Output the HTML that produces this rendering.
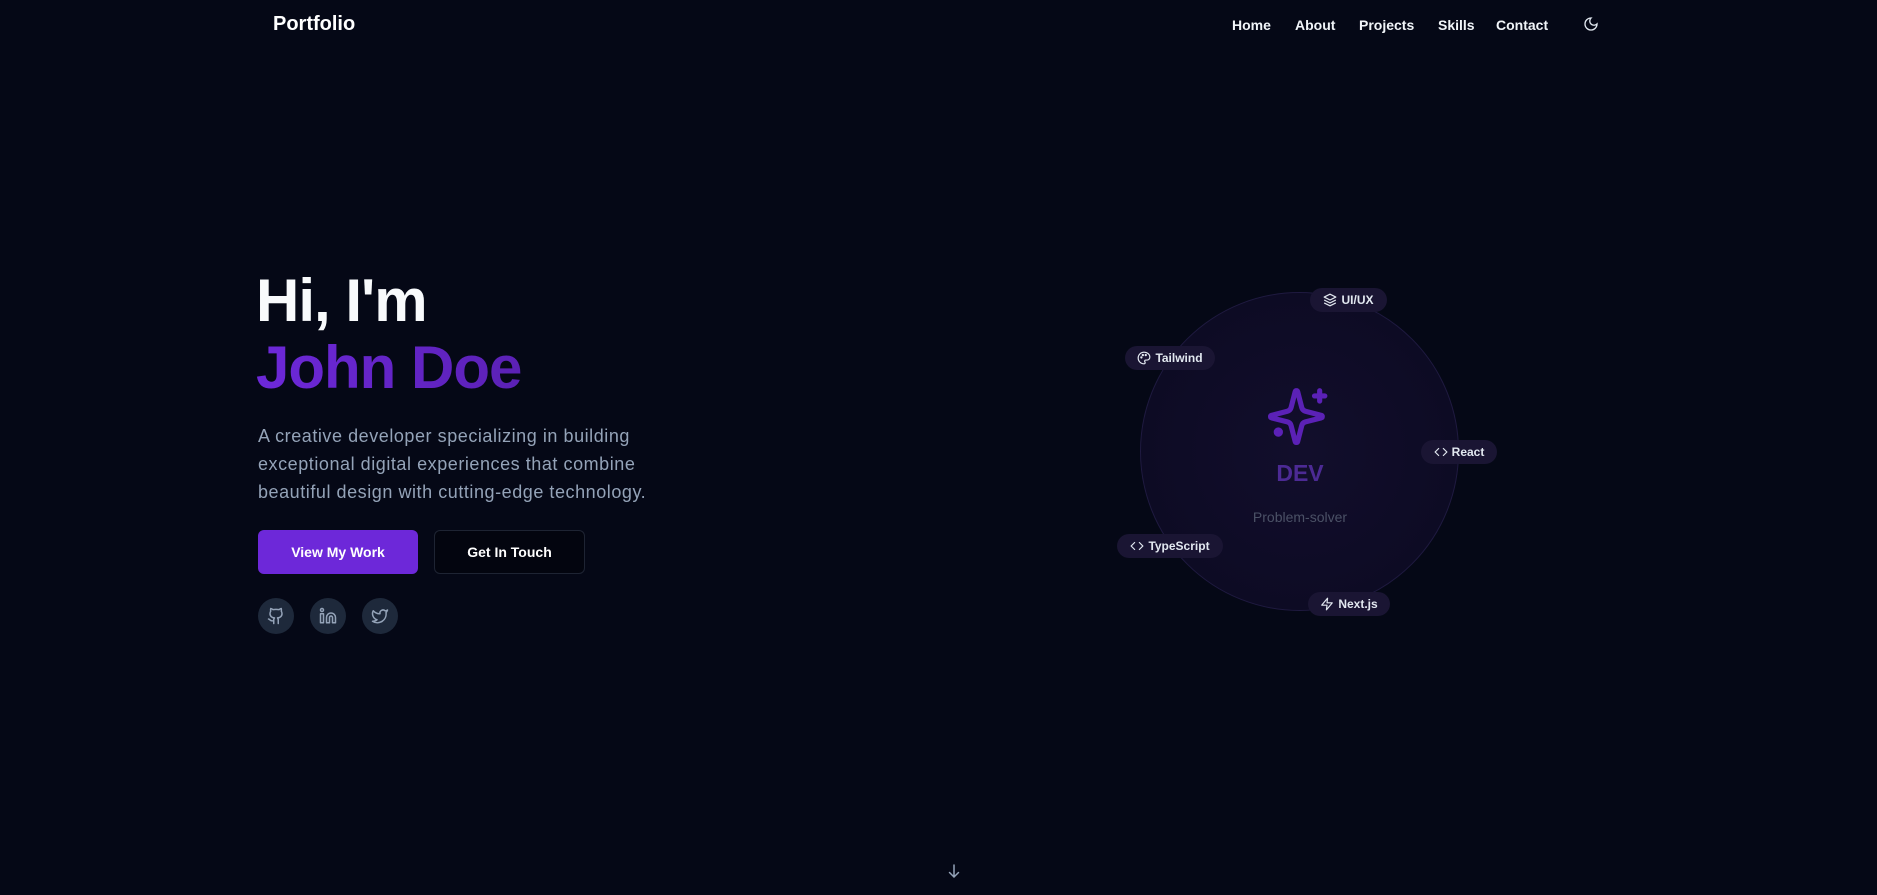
<!DOCTYPE html>
<html><head><meta charset="utf-8"><style>
*{margin:0;padding:0;box-sizing:border-box}
body{width:1877px;height:895px;overflow:hidden;background:#050816;font-family:"Liberation Sans",sans-serif;position:relative;color:#f8fafc}
.a{position:absolute;white-space:nowrap}
.nav{font-size:14px;font-weight:bold;color:#f1f5f9;top:17px}
.btn{position:absolute;height:44px;border-radius:6px;font-size:14px;font-weight:bold;display:flex;align-items:center;justify-content:center}
.soc{position:absolute;top:598px;width:36px;height:36px;border-radius:50%;background:#1e293b;display:flex;align-items:center;justify-content:center}
.badge{position:absolute;height:24px;border-radius:12px;background:#1a1533;color:#e2e8f0;font-size:12px;font-weight:bold;display:flex;align-items:center;justify-content:center;gap:4px}
</style></head><body>
<div class="a" style="left:273px;top:13px;font-size:20px;font-weight:bold;color:#fff">Portfolio</div>
<div class="a nav" style="left:1232px">Home</div>
<div class="a nav" style="left:1295px">About</div>
<div class="a nav" style="left:1359px">Projects</div>
<div class="a nav" style="left:1438px">Skills</div>
<div class="a nav" style="left:1496px">Contact</div>
<svg class="a" style="left:1583px;top:16px" width="16" height="16" viewBox="0 0 24 24" fill="none" stroke="#e2e8f0" stroke-width="2" stroke-linecap="round"><path d="M12 3a6 6 0 0 0 9 9 9 9 0 1 1-9-9Z"/></svg>

<div class="a" style="left:256px;top:266px;font-size:60px;font-weight:bold;letter-spacing:-1px;color:#f8fafc;line-height:70px">Hi, I'm</div>
<div class="a" style="left:256px;top:333px;font-size:60px;font-weight:bold;letter-spacing:-1px;line-height:70px;background:linear-gradient(90deg,#6d28d9,#5b21b6);-webkit-background-clip:text;color:transparent">John Doe</div>
<div class="a" style="left:258px;top:422px;font-size:18px;line-height:28px;color:#94a3b8;letter-spacing:0.55px">A creative developer specializing in building<br>exceptional digital experiences that combine<br>beautiful design with cutting-edge technology.</div>
<div class="btn" style="left:258px;top:530px;width:160px;background:#6d28d9;color:#fff">View My Work</div>
<div class="btn" style="left:434px;top:530px;width:151px;background:#03050f;border:1px solid #1e2433;color:#fff">Get In Touch</div>
<div class="soc" style="left:258px"><svg width="18" height="18" viewBox="0 0 24 24" fill="none" stroke="#94a3b8" stroke-width="2" stroke-linecap="round" stroke-linejoin="round"><path d="M15 22v-4a4.8 4.8 0 0 0-1-3.5c3 0 6-2 6-5.5.08-1.25-.27-2.48-1-3.5.28-1.15.28-2.35 0-3.5 0 0-1 0-3 1.5-2.640-.5-5.36-.5-8 0C6 2 5 2 5 2c-.3 1.15-.3 2.35 0 3.5A5.4 5.4 0 0 0 4 9c0 3.5 3 5.5 6 5.5-.39.49-.68 1.05-.85 1.650-.17.6-.22 1.23-.15 1.85v4"/><path d="M9 18c-4.51 2-5-2-7-2"/></svg></div>
<div class="soc" style="left:310px"><svg width="18" height="18" viewBox="0 0 24 24" fill="none" stroke="#94a3b8" stroke-width="2" stroke-linecap="round" stroke-linejoin="round"><path d="M16 8a6 6 0 0 1 6 6v7h-4v-7a2 2 0 0 0-4 0v7h-4v-7a6 6 0 0 1 6-6z"/><rect x="2" y="9" width="4" height="12"/><circle cx="4" cy="4" r="2"/></svg></div>
<div class="soc" style="left:362px"><svg width="18" height="18" viewBox="0 0 24 24" fill="none" stroke="#94a3b8" stroke-width="2" stroke-linecap="round" stroke-linejoin="round"><path d="M22 4s-.7 2.1-2 3.4c1.6 10-9.4 17.3-18 11.6 2.2.1 4.4-.6 6-2C3 15.5.5 9.6 3 5c2.2 2.6 5.6 4.1 9 4-.9-4.2 4-6.6 7-3.8 1.1 0 3-1.2 3-1.2z"/></svg></div>

<div class="a" style="left:1140px;top:292px;width:319px;height:319px;border-radius:50%;background:radial-gradient(circle,#120e2c 0%,#0d0b24 70%,#0b0a22 100%);border:1px solid #1f1a40"></div>
<svg class="a" style="left:1268px;top:383px" width="62" height="62" viewBox="0 0 24 24" fill="none" stroke="#5b21b6" stroke-width="2" stroke-linecap="round" stroke-linejoin="round"><path d="M9.94 15.5A2 2 0 0 0 8.5 14.06l-6.14-1.58a.5.5 0 0 1 0-.96L8.5 9.94A2 2 0 0 0 9.94 8.5l1.58-6.14a.5.5 0 0 1 .96 0L14.06 8.5A2 2 0 0 0 15.5 9.94l6.14 1.58a.5.5 0 0 1 0 .96L15.5 14.06a2 2 0 0 0-1.44 1.44l-1.58 6.14a.5.5 0 0 1-.96 0z" transform="translate(-1 1)"/><path d="M20 3v4M22 5h-4"/><circle cx="4" cy="19" r=".8" fill="#5b21b6"/></svg>
<div class="a" style="left:1200px;width:200px;text-align:center;top:460px;font-size:23px;font-weight:bold;color:#4c2a94">DEV</div>
<div class="a" style="left:1200px;width:200px;text-align:center;top:509px;font-size:14px;color:#4b5166">Problem-solver</div>

<div class="badge" style="left:1310px;top:288px;width:77px"><svg width="14" height="14" viewBox="0 0 24 24" fill="none" stroke="#e2e8f0" stroke-width="2" stroke-linejoin="round"><path d="m12 2 10 5-10 5L2 7z"/><path d="m2 12 10 5 10-5M2 17l10 5 10-5"/></svg>UI/UX</div>
<div class="badge" style="left:1125px;top:346px;width:90px"><svg width="14" height="14" viewBox="0 0 24 24" fill="none" stroke="#e2e8f0" stroke-width="2"><path d="M12 2a10 10 0 0 0 0 20c1 0 2-.8 2-2 0-.5-.2-.9-.5-1.3-.3-.3-.4-.7-.4-1.2 0-1 .8-1.9 2-1.9h2.3A5.5 5.5 0 0 0 22 10.4C22 5.8 17.5 2 12 2z"/><circle cx="7.5" cy="11" r="1"/><circle cx="10" cy="7" r="1"/><circle cx="15" cy="7" r="1"/></svg>Tailwind</div>
<div class="badge" style="left:1421px;top:440px;width:76px"><svg width="14" height="14" viewBox="0 0 24 24" fill="none" stroke="#e2e8f0" stroke-width="2" stroke-linecap="round"><path d="m16 18 6-6-6-6M8 6l-6 6 6 6"/></svg>React</div>
<div class="badge" style="left:1117px;top:534px;width:106px"><svg width="14" height="14" viewBox="0 0 24 24" fill="none" stroke="#e2e8f0" stroke-width="2" stroke-linecap="round"><path d="m16 18 6-6-6-6M8 6l-6 6 6 6"/></svg>TypeScript</div>
<div class="badge" style="left:1308px;top:592px;width:82px"><svg width="14" height="14" viewBox="0 0 24 24" fill="none" stroke="#e2e8f0" stroke-width="2" stroke-linejoin="round"><path d="M13 2 3 14h9l-1 8 10-12h-9z"/></svg>Next.js</div>

<svg class="a" style="left:945px;top:862px" width="18" height="18" viewBox="0 0 24 24" fill="none" stroke="#94a3b8" stroke-width="2" stroke-linecap="round"><path d="M12 4v16M6 14l6 6 6-6"/></svg>
</body></html>
